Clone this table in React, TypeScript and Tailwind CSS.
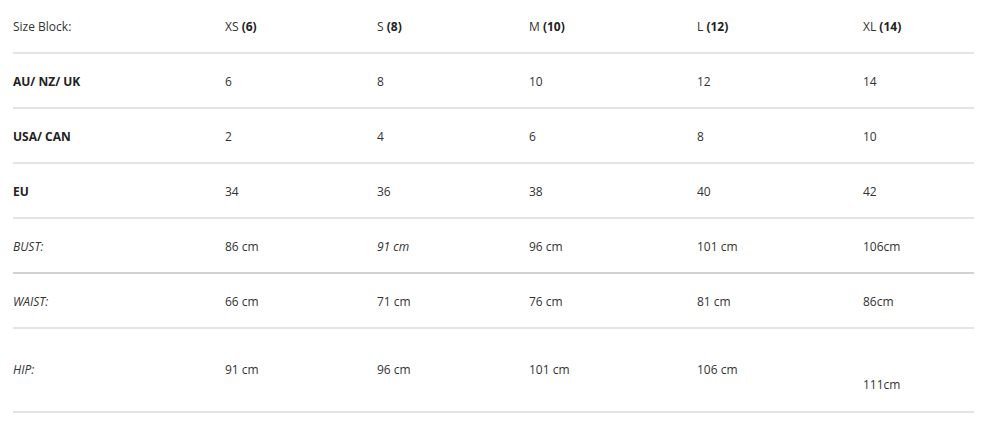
const sizes = [
  { label: "XS", n: "6" },
  { label: "S", n: "8" },
  { label: "M", n: "10" },
  { label: "L", n: "12" },
  { label: "XL", n: "14" },
];

type Row = {
  name: string;
  kind: "bold" | "italic";
  values: string[];
  italicIdx?: number;
  border: string;
};

const rows: Row[] = [
  { name: "AU/ NZ/ UK", kind: "bold", values: ["6", "8", "10", "12", "14"], border: "border-[#e4e4e4]" },
  { name: "USA/ CAN", kind: "bold", values: ["2", "4", "6", "8", "10"], border: "border-[#e4e4e4]" },
  { name: "EU", kind: "bold", values: ["34", "36", "38", "40", "42"], border: "border-[#e4e4e4]" },
  { name: "BUST:", kind: "italic", values: ["86 cm", "91 cm", "96 cm", "101 cm", "106cm"], italicIdx: 1, border: "border-[#d2d2d2]" },
  { name: "WAIST:", kind: "italic", values: ["66 cm", "71 cm", "76 cm", "81 cm", "86cm"], border: "border-[#e4e4e4]" },
];

const grid = "grid grid-cols-[212px_152px_152px_168px_166px_111px]";

export default function App() {
  return (
    <div className="h-[425px] w-[1000px] bg-white pl-[13px] font-['Open_Sans','Noto_Sans',sans-serif] text-[12px] text-[#333]">
      <div className="w-[961px]">
        <div className={`${grid} h-[54px] items-center border-b-2 border-[#e4e4e4] pt-[2px]`}>
          <span>Size Block:</span>
          {sizes.map((s) => (
            <span key={s.label}>
              {s.label} <b className="font-bold text-[#222]">({s.n})</b>
            </span>
          ))}
        </div>

        {rows.map((r) => (
          <div key={r.name} className={`${grid} h-[55px] items-center border-b-2 pt-[2px] ${r.border}`}>
            <span className={r.kind === "bold" ? "font-bold text-[#222]" : "italic"}>{r.name}</span>
            {r.values.map((v, i) => (
              <span key={i} className={r.italicIdx === i ? "italic" : ""}>
                {v}
              </span>
            ))}
          </div>
        ))}

        <div className={`${grid} h-[84px] items-center border-b-2 border-[#e4e4e4]`}>
          <span className="italic">HIP:</span>
          <span>91 cm</span>
          <span>96 cm</span>
          <span>101 cm</span>
          <span>106 cm</span>
          <span className="pt-[30px]">111cm</span>
        </div>
      </div>
    </div>
  );
}
